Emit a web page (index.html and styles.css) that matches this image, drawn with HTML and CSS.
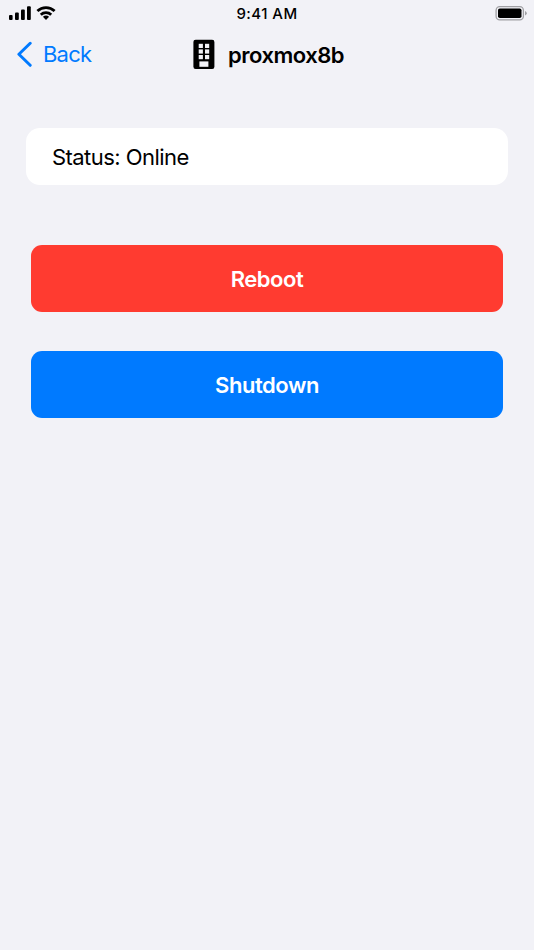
FILE: index.html
```html
<!DOCTYPE html>
<html lang="en">
<head>
    <meta charset="UTF-8">
    <meta name="viewport" content="width=device-width, initial-scale=1.0">
    <title>proxmox8b</title>
    <link rel="stylesheet" href="styles.css">
</head>
<body>
    <div class="status-bar">
        <div class="signals">
            <svg width="64" height="28" viewBox="0 0 64 28">
                <rect x="9" y="15" width="3.6" height="5" rx="1"/>
                <rect x="15" y="12.4" width="3.8" height="7.6" rx="1"/>
                <rect x="21" y="9.4" width="3.8" height="10.6" rx="1"/>
                <rect x="27" y="6.3" width="3.8" height="13.7" rx="1"/>
                <path class="wifi-arc" d="M37.4 11.1a12.4 12.4 0 0 1 17.2 0M40.8 14.7a7.6 7.6 0 0 1 10.4 0"/>
                <path d="M46 19.9l-3.1-3.1a4.6 4.6 0 0 1 6.2 0z"/>
            </svg>
        </div>
        <div class="time">9:41 AM</div>
        <div class="battery">
            <svg width="54" height="28" viewBox="480 0 54 28">
                <rect class="battery-frame" x="496.1" y="6.6" width="27.3" height="13.3" rx="3.6"/>
                <rect x="498" y="8.5" width="23.5" height="9.5" rx="1.8"/>
                <path class="battery-tip" d="M525 10.9q1.8.8 1.8 2.3t-1.8 2.3z"/>
            </svg>
        </div>
    </div>

    <header class="nav">
        <a href="#" class="back">
            <svg width="16" height="26" viewBox="0 0 16 26">
                <path d="M14.2 2.3L2.9 13.3l11.3 11"/>
            </svg>
            <span>Back</span>
        </a>
        <div class="title">
            <svg width="22" height="30" viewBox="0 0 22 30">
                <rect x="0.4" y="0.7" width="21" height="29.2" rx="2.2"/>
                <g class="windows">
                    <rect x="5.7" y="4.8" width="4.2" height="4.2"/>
                    <rect x="12" y="4.8" width="4.2" height="4.2"/>
                    <rect x="5.7" y="10.4" width="4.2" height="4.2"/>
                    <rect x="12" y="10.4" width="4.2" height="4.2"/>
                    <rect x="5.7" y="16" width="4.2" height="4.2"/>
                    <rect x="12" y="16" width="4.2" height="4.2"/>
                    <rect x="6.4" y="22.4" width="9" height="5.4"/>
                </g>
            </svg>
            <h1>proxmox8b</h1>
        </div>
    </header>

    <main>
        <div class="card">Status: Online</div>
        <div class="actions">
            <button class="btn reboot">Reboot</button>
            <button class="btn shutdown">Shutdown</button>
        </div>
    </main>
</body>
</html>
```
FILE: styles.css
```css
body {
    font-family: Inter, "Liberation Sans", sans-serif;
    margin: 0;
    min-height: 950px;
    background-color: #f2f2f7;
    color: #000;
    font-size: 22px;
}
svg {
    display: block;
    flex-shrink: 0;
}
.status-bar {
    display: grid;
    grid-template-columns: 1fr auto 1fr;
    height: 28px;
}
.time {
    font-size: 15px;
    font-weight: 500;
    line-height: 28px;
    letter-spacing: 0.45px;
}
.battery {
    justify-self: end;
}
.wifi-arc {
    fill: none;
    stroke: #000;
    stroke-width: 2.8;
}
.battery-frame {
    fill: none;
    stroke: #a0a0a4;
    stroke-width: 1.3;
}
.battery-tip {
    fill: #a0a0a4;
}
.nav {
    display: grid;
    grid-template-columns: 193px 1fr;
    align-items: center;
    height: 52px;
}
.back {
    display: flex;
    align-items: center;
    gap: 11px;
    padding-left: 16px;
    color: #007aff;
    text-decoration: none;
    letter-spacing: -0.8px;
}
.back path {
    fill: none;
    stroke: #007aff;
    stroke-width: 3;
    stroke-linecap: round;
    stroke-linejoin: round;
}
.title {
    display: flex;
    align-items: center;
    gap: 13px;
}
.windows {
    fill: #f2f2f7;
}
h1 {
    margin: 0;
    padding-top: 2px;
    font-size: 22px;
    font-weight: 600;
    letter-spacing: -0.5px;
}
main {
    padding: 48px 26px 0;
}
.card {
    height: 56.6px;
    line-height: 58px;
    padding: 0 26px;
    border-radius: 14px;
    background-color: #fff;
    letter-spacing: -0.55px;
}
.actions {
    display: flex;
    flex-direction: column;
    gap: 38.7px;
    padding: 60px 5px 0;
}
.btn {
    height: 67.4px;
    padding: 1px 0 0;
    border: none;
    border-radius: 11px;
    color: #fff;
    font-family: inherit;
    font-size: 22px;
    font-weight: 600;
    letter-spacing: -0.45px;
}
.reboot {
    background-color: #ff3b30;
}
.shutdown {
    background-color: #007aff;
}
```
